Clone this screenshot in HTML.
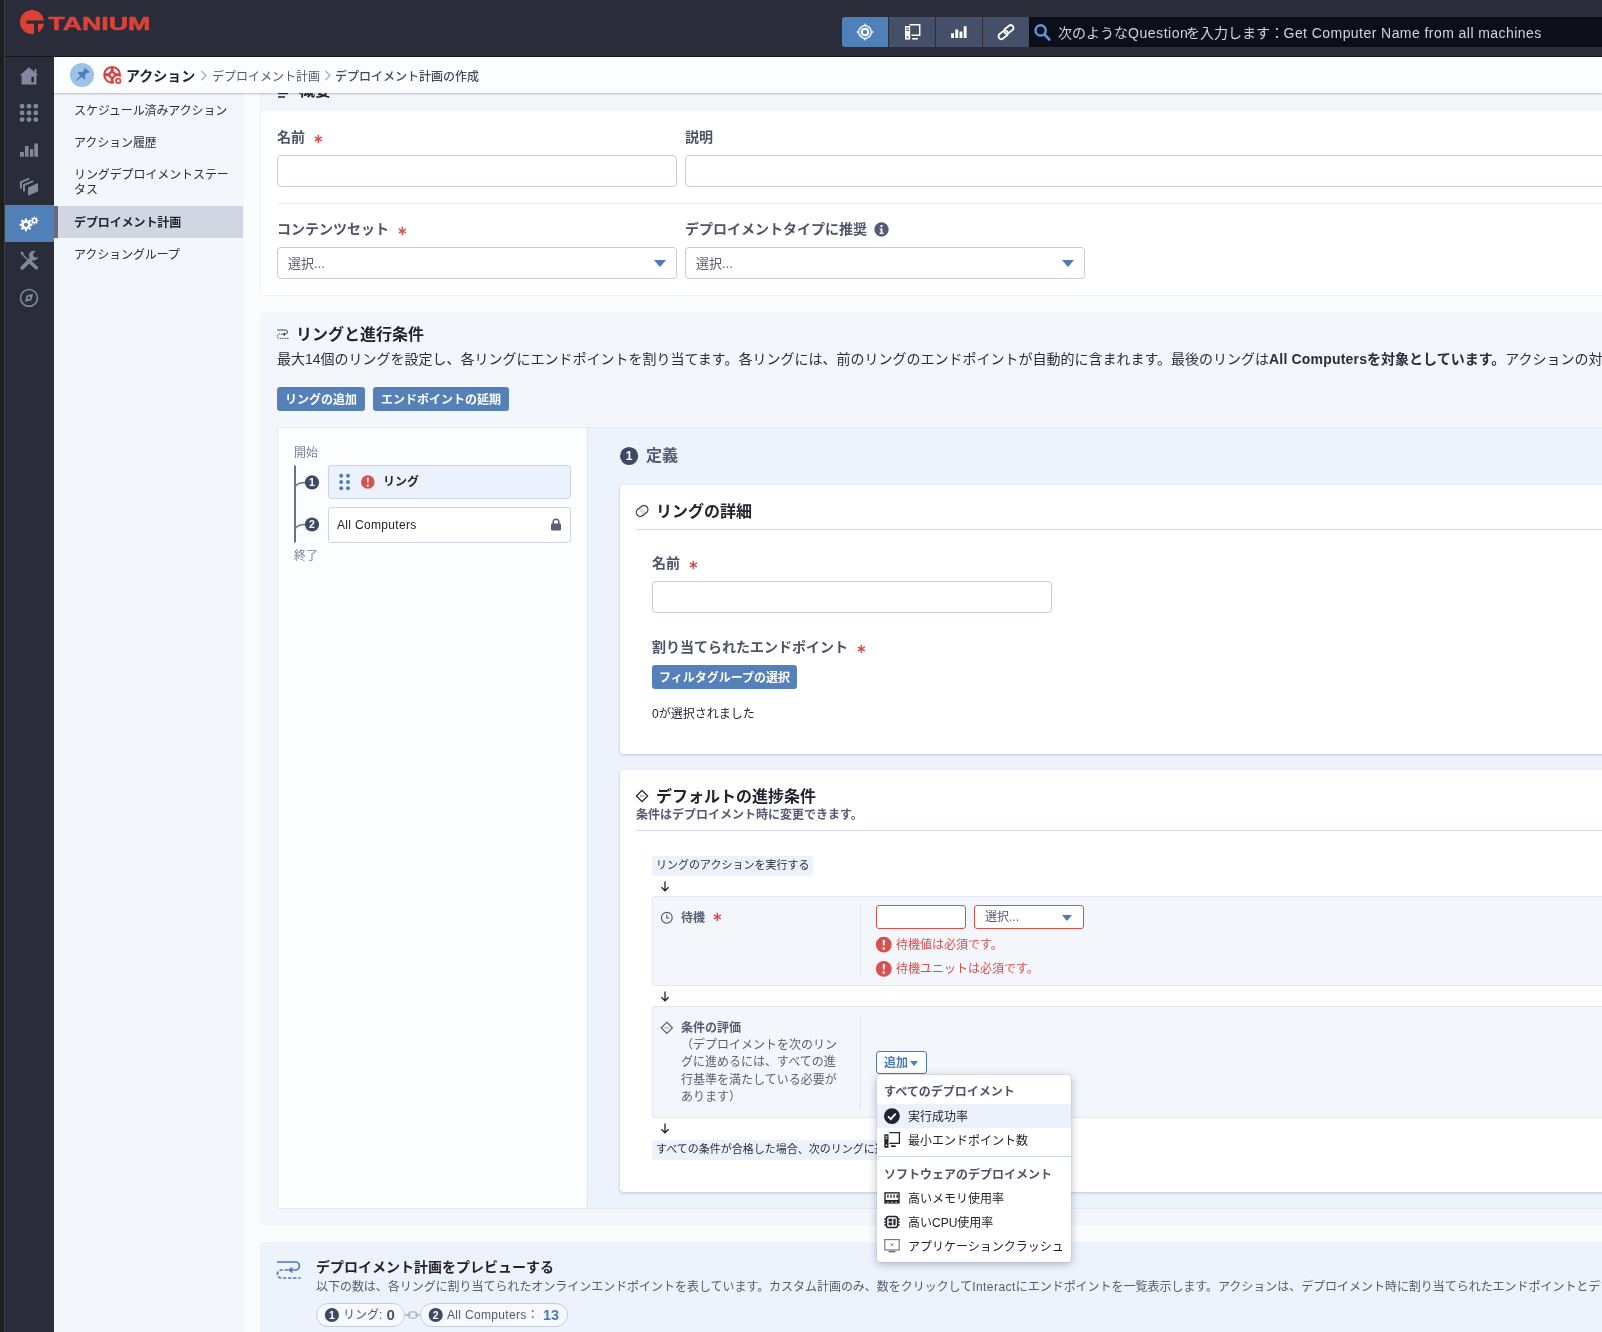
<!DOCTYPE html>
<html lang="ja">
<head>
<meta charset="utf-8">
<title>デプロイメント計画の作成</title>
<style>
*{box-sizing:border-box;margin:0;padding:0}
html,body{width:1602px;height:1332px;overflow:hidden}
body{position:relative;background:#fbfcfe;font-family:"Liberation Sans","Noto Sans CJK JP",sans-serif;font-size:12px;color:#22232d;line-height:1.3}
.abs{position:absolute}
#hdr,#rail,#crumb,#side,#main{will-change:transform}
#edge{left:0;top:0;width:4px;height:1332px;background:#1e1e1c;z-index:50}
#edge2{left:4px;top:0;width:1px;height:1332px;background:#3a3d4a;z-index:50}
#hdr{left:0;top:0;width:1602px;height:57px;background:#2a2c39;border-bottom:1px solid #14161d;z-index:40}
#rail{left:0;top:57px;width:54px;height:1275px;background:#2a2c39;z-index:30}
#rail .act{position:absolute;left:5px;top:148px;width:49px;height:36.6px;background:#5080b8}
#rail svg{position:absolute}
#crumb{left:54px;top:57px;width:1548px;height:36px;background:#fcfdff;box-shadow:0 1px 2px rgba(60,75,110,.35);z-index:20}
#side{left:54px;top:93px;width:190px;height:1239px;background:#f3f6fb;z-index:10}
#side .it{position:absolute;left:20px;width:168px;font-size:12px;color:#2b2d3a;line-height:15px;letter-spacing:-.1px}
#side .sel{position:absolute;left:0;top:113px;width:189px;height:32px;background:#d0d6e2;border-left:4px solid #676b82}
.lbl{position:absolute;font-size:14px;font-weight:bold;color:#4e5468;white-space:nowrap;line-height:18px}
.req{color:#d9504e;font-weight:bold;font-family:"DejaVu Sans",sans-serif;font-size:13px;margin-left:8px;position:relative;top:1px}
.inp{position:absolute;background:#fff;border:1px solid #c5ccda;border-radius:4px}
.ph{position:absolute;left:10px;top:7px;font-size:13px;color:#5a6072;line-height:17px}
.caret{position:absolute;width:0;height:0;border-left:6px solid transparent;border-right:6px solid transparent;border-top:7px solid #4a7cb8}
.btn{position:absolute;background:#5581b8;color:#fff;font-weight:bold;font-size:12px;border-radius:3px;height:24px;line-height:27px;text-align:center;white-space:nowrap}
.card{position:absolute;border-radius:4px}
.h16{position:absolute;font-size:16px;font-weight:bold;color:#22232d;white-space:nowrap;line-height:20px}
.nw{white-space:nowrap}
.chip{background:#ecf2fd;border-radius:3px;height:19.3px;margin-top:.4px;font-size:11px;line-height:18px;color:#2b2d3a;padding-left:4px;overflow:hidden}
.box{background:#f3f6fb;border:1px solid #e1e6ef;border-radius:3px}
.pill{height:23.6px;border:1px solid #c5ccda;border-radius:12px;background:#f6f9fe}
.ddh{font-size:12px;font-weight:bold;line-height:16px;color:#4e5468}
.ddi{font-size:12px;line-height:16px;color:#22232d}
</style>
</head>
<body>
<div id="edge" class="abs"></div><div id="edge2" class="abs"></div>

<!-- HEADER -->
<div id="hdr" class="abs">
 <svg class="abs" style="left:0;top:0" width="170" height="56" viewBox="0 0 170 56">
  <circle cx="32" cy="22" r="12" fill="#dc4138"/>
  <path d="M26.6 20.4H44.5V23.7H37.9V34.5H34.1V23.7H26.6Z" fill="#2a2c39"/>
  <text x="0" y="0" transform="translate(48.3,30) scale(1.44,1)" font-family="Liberation Sans, sans-serif" font-weight="bold" font-size="18.6" fill="#dc4138" stroke="#dc4138" stroke-width=".55" stroke-linejoin="round">TANIUM</text>
 </svg>
 <div class="abs" style="left:842px;top:17px;width:46px;height:30px;background:#5080b8;border-radius:3px 0 0 3px"></div>
 <div class="abs" style="left:889px;top:17px;width:46px;height:30px;background:#435068"></div>
 <div class="abs" style="left:936px;top:17px;width:46px;height:30px;background:#435068"></div>
 <div class="abs" style="left:983px;top:17px;width:46px;height:30px;background:#435068"></div>
 <div class="abs" style="left:1029px;top:17px;width:573px;height:30px;background:#0d0f18"></div>
 <svg class="abs" style="left:842px;top:17px" width="240" height="30" viewBox="842 17 240 30" fill="#fff">
  <!-- target -->
  <circle cx="865" cy="32" r="6.3" fill="none" stroke="#fff" stroke-width="1.3"/>
  <rect x="861.9" y="28.9" width="6.2" height="6.2" rx="2.6" fill="none" stroke="#fff" stroke-width="2.2"/>
  <path d="M863.5 24.7L865 23.2L866.5 24.7ZM863.5 39.3L865 40.8L866.5 39.3ZM857.7 30.5L856.2 32L857.7 33.5ZM872.3 30.5L873.8 32L872.3 33.5Z"/>
  <!-- computer -->
  <path d="M905 26h5.2v13.6h-5.2z"/>
  <path d="M906 28.2h3.2M906 30.4h3.2" stroke="#435068" stroke-width="1"/>
  <circle cx="907.6" cy="37.2" r="0.9" fill="#435068"/>
  <path d="M909.5 24.7h10.2v10.6h-8.2" fill="none" stroke="#fff" stroke-width="1.5"/>
  <path d="M912.2 38h5.6v1.6h-5.6z"/>
  <!-- bars -->
  <path d="M951.1 33.3h2.9v4.8h-2.9zM955.3 29.6h2.9v8.5h-2.9zM959.5 31.6h2.9v6.5h-2.9zM963.7 26.2h2.9v11.9h-2.9z"/>
  <!-- link -->
  <g fill="none" stroke="#fff" stroke-width="1.8" stroke-linecap="round">
   <rect x="-5.2" y="-2.8" width="10.4" height="5.6" rx="2.8" transform="translate(1003.2,34.8) rotate(-38)"/>
   <rect x="-5.2" y="-2.8" width="10.4" height="5.6" rx="2.8" transform="translate(1008.8,29.4) rotate(-38)"/>
  </g>
  <!-- search -->
  <circle cx="1040.6" cy="30.4" r="5.1" fill="none" stroke="#5a9be2" stroke-width="2.4"/>
  <path d="M1044.6 34.6L1049.2 39.4" stroke="#5a9be2" stroke-width="2.8" stroke-linecap="round"/>
 </svg>
 <div class="abs nw" style="left:1058px;top:23px;font-size:14px;line-height:20px;color:#d2d5de">次のような<span style="letter-spacing:.55px">Question</span><span style="margin-left:-2.4px">を入力します：</span><span style="letter-spacing:.44px;margin-left:-.5px">Get Computer Name from all machines</span></div>
</div>

<!-- RAIL -->
<div id="rail" class="abs"><div class="act"></div>
 <svg style="left:0;top:0" width="54" height="260" viewBox="0 0 54 260" fill="#83879f">
  <!-- home -->
  <path d="M29 10.2L38.2 18.2H36.4V27.6H21.6V18.2H19.8Z"/>
  <path d="M34.5 12h2v6h-2z"/>
  <path d="M31.4 19.8h2.6v5.6h-2.6z" fill="#2a2c39"/>
  <!-- grid -->
  <g>
   <circle cx="22.1" cy="49.2" r="2.4"/><circle cx="29" cy="49.2" r="2.4"/><circle cx="35.8" cy="49.2" r="2.4"/>
   <circle cx="22.1" cy="55.9" r="2.4"/><circle cx="29" cy="55.9" r="2.4"/><circle cx="35.8" cy="55.9" r="2.4"/>
   <circle cx="22.1" cy="62.6" r="2.4"/><circle cx="29" cy="62.6" r="2.4"/><circle cx="35.8" cy="62.6" r="2.4"/>
  </g>
  <!-- bars -->
  <path d="M20 95h3.9v4.7H20zM25 89.1h3.5v10.6H25zM29.9 92h3.4v7.7h-3.4zM34.3 86.4H38v13.3h-3.7z"/>
  <!-- layers -->
  <path d="M28 130.4L38 126V134.5L28 138.8Z"/>
  <path d="M24 134.6V128L33.2 124.1" fill="none" stroke="#83879f" stroke-width="2"/>
  <path d="M20.9 131.8V125.2L29.2 121.6" fill="none" stroke="#83879f" stroke-width="2"/>
  <!-- gears -->
  <path fill="#fff" fill-rule="evenodd" d="M24.87 163.24 L24.98 161.38 L27.02 161.38 L27.13 163.24 L28.42 163.77 L29.82 162.54 L31.26 163.98 L30.03 165.38 L30.56 166.67 L32.42 166.78 L32.42 168.82 L30.56 168.93 L30.03 170.22 L31.26 171.62 L29.82 173.06 L28.42 171.83 L27.13 172.36 L27.02 174.22 L24.98 174.22 L24.87 172.36 L23.58 171.83 L22.18 173.06 L20.74 171.62 L21.97 170.22 L21.44 168.93 L19.58 168.82 L19.58 166.78 L21.44 166.67 L21.97 165.38 L20.74 163.98 L22.18 162.54 L23.58 163.77Z M23.90 167.80 a2.10 2.10 0 1 0 4.20 0 a2.10 2.10 0 1 0 -4.20 0Z"/>
  <path fill="#fff" fill-rule="evenodd" d="M33.72 160.88 L33.77 159.65 L35.03 159.65 L35.08 160.88 L35.84 161.20 L36.75 160.36 L37.64 161.25 L36.80 162.16 L37.12 162.92 L38.35 162.97 L38.35 164.23 L37.12 164.28 L36.80 165.04 L37.64 165.95 L36.75 166.84 L35.84 166.00 L35.08 166.32 L35.03 167.55 L33.77 167.55 L33.72 166.32 L32.96 166.00 L32.05 166.84 L31.16 165.95 L32.00 165.04 L31.68 164.28 L30.45 164.23 L30.45 162.97 L31.68 162.92 L32.00 162.16 L31.16 161.25 L32.05 160.36 L32.96 161.20Z M33.10 163.60 a1.30 1.30 0 1 0 2.60 0 a1.30 1.30 0 1 0 -2.60 0Z"/>
  <!-- tools -->
  <path d="M36.3 210.7L30.6 205.5" stroke="#83879f" stroke-width="3.5" stroke-linecap="round" fill="none"/>
  <path d="M30.8 205.7L21.6 196.8" stroke="#83879f" stroke-width="1.5" fill="none"/>
  <path d="M20.3 196l1.5-1.6 2.3 1.7-1.9 2z"/>
  <path d="M22.2 210.9L31.6 201.6" stroke="#83879f" stroke-width="3.7" stroke-linecap="round" fill="none"/>
  <path d="M35.9 194.3a4.8 4.8 0 1 0 2.4 5.6l-3 .9-2.3-2.1.6-3z"/>
  <!-- compass -->
  <circle cx="29" cy="240.9" r="8.4" fill="none" stroke="#83879f" stroke-width="1.6"/>
  <path fill-rule="evenodd" d="M33.1 236.8L31.4 243.3L24.9 245L26.6 238.5ZM27.7 240.9a1.3 1.3 0 1 0 2.6 0a1.3 1.3 0 1 0-2.6 0Z"/>
 </svg>
</div>

<!-- BREADCRUMB -->
<div id="crumb" class="abs">
 <svg class="abs" style="left:0;top:0" width="160" height="36" viewBox="54 57 160 36">
  <circle cx="82" cy="74.9" r="12" fill="#9cc3e6"/>
  <g transform="translate(81.6,75.5) rotate(45) scale(1.06)" fill="#4f7fba">
   <path d="M-2.9 -7.6h5.8v1.4l-1 .6v3.2l2.6 1.8v1.5h-9v-1.5l2.6-1.8v-3.2l-1-.6z"/>
   <path d="M-1 .7h2L0 8.6z"/>
  </g>
  <circle cx="112.1" cy="74.8" r="7.9" fill="none" stroke="#d9413a" stroke-width="2"/>
  <path d="M112.1 67v15.6M104.3 74.8h15.6" stroke="#d9413a" stroke-width="2.9"/>
  <circle cx="112.1" cy="74.8" r="2.7" fill="#fcfdff" stroke="#d9413a" stroke-width="2.1"/>
  <circle cx="118.2" cy="80.9" r="3" fill="#fcfdff" stroke="#fcfdff" stroke-width="2.6"/>
  <circle cx="118.2" cy="80.9" r="2.2" fill="#fcfdff" stroke="#d9413a" stroke-width="1.7"/>
 </svg>
 <div class="abs nw" style="left:72px;top:9px;font-size:14px;font-weight:bold;line-height:20px;color:#22232d">アクション</div>
 <svg class="abs" style="left:146px;top:13px" width="8" height="11" viewBox="0 0 8 11"><path d="M1.5 1L6 5.5L1.5 10" fill="none" stroke="#a3a8b8" stroke-width="1.1"/></svg>
 <div class="abs nw" style="left:158px;top:10.5px;font-size:12px;line-height:18px;color:#555b6e">デプロイメント計画</div>
 <svg class="abs" style="left:269.5px;top:13px" width="8" height="11" viewBox="0 0 8 11"><path d="M1.5 1L6 5.5L1.5 10" fill="none" stroke="#a3a8b8" stroke-width="1.1"/></svg>
 <div class="abs nw" style="left:281px;top:10.5px;font-size:12px;line-height:18px;color:#444a5c;font-weight:500">デプロイメント計画の作成</div>
</div>

<!-- SIDE MENU -->
<div id="side" class="abs">
 <div class="sel"></div>
 <div class="it" style="top:10.5px">スケジュール済みアクション</div>
 <div class="it" style="top:43px">アクション履歴</div>
 <div class="it" style="top:75px;width:160px">リングデプロイメントステータス</div>
 <div class="it" style="top:123px;font-weight:bold;color:#22232d">デプロイメント計画</div>
 <div class="it" style="top:155px">アクショングループ</div>
</div>

<!-- MAIN -->
<div id="main" class="abs" style="left:243px;top:93px;width:1359px;height:1239px;overflow:hidden">
<div class="abs" id="pg" style="left:-243px;top:-93px;width:1602px;height:1332px">

<!-- CARD 1 : overview -->
<div class="card" style="left:260px;top:60px;width:1360px;height:236px;background:#fff;border:1px solid #eef1f6"></div>
<div class="abs" style="left:261px;top:60px;width:1341px;height:50.7px;background:#f3f6fb"></div>
<svg class="abs" style="left:277px;top:84px" width="12" height="14" viewBox="0 0 12 14"><path d="M1 1.5h10M1 5.5h10M1 9.5h10M1 13h7" stroke="#22232d" stroke-width="1.6" fill="none"/></svg>
<div class="h16" style="left:299px;top:81px">概要</div>

<div class="lbl" style="left:277px;top:128px">名前<span class="req">∗</span></div>
<div class="inp" style="left:277px;top:155px;width:400px;height:32px"></div>
<div class="lbl" style="left:685px;top:128px">説明</div>
<div class="inp" style="left:685px;top:155px;width:940px;height:32px"></div>
<div class="abs" style="left:277px;top:203px;width:1325px;height:1px;background:#eef1f5"></div>
<div class="lbl" style="left:277px;top:220px">コンテンツセット<span class="req">∗</span></div>
<div class="inp" style="left:277px;top:247px;width:400px;height:32px"><div class="ph">選択...</div><div class="caret" style="left:376px;top:12px"></div></div>
<div class="lbl" style="left:685px;top:220px">デプロイメントタイプに推奨</div>
<svg class="abs" style="left:873.6px;top:221.7px" width="15" height="15" viewBox="0 0 14 14"><circle cx="7" cy="7" r="6.7" fill="#555b72"/><circle cx="7" cy="3.8" r="1.1" fill="#fff"/><path d="M5.3 6h2.6v4h1v1.2H5.2V10h1V7.2h-.9z" fill="#fff"/></svg>
<div class="inp" style="left:685px;top:247px;width:400px;height:32px"><div class="ph">選択...</div><div class="caret" style="left:376px;top:12px"></div></div>

<!-- CARD 2 : rings -->
<div class="card" style="left:260px;top:312px;width:1360px;height:914px;background:#f3f6fb"></div>
<svg class="abs" style="left:275px;top:327px" width="16" height="14" viewBox="275 327 16 14"><g fill="none" stroke="#3f4458" stroke-width="1"><path d="M277.2 330h8.2a2.1 2.1 0 0 1 0 4.2H284.8"/><path d="M282.6 334.2H279.4a2.1 2.1 0 0 0 0 4.2H288.8" stroke-dasharray="1.5 .9"/></g><path d="M282.4 334.2l2.6-1.9v3.8z" fill="#3f4458"/></svg>
<div class="h16" style="left:296px;top:325px">リングと進行条件</div>
<div class="abs nw" style="left:277px;top:349px;font-size:14px;line-height:20px;color:#2b2d3a">最大14個のリングを設定し、各リングにエンドポイントを割り当てます。各リングには、前のリングのエンドポイントが自動的に含まれます。最後のリングは<b><span style="letter-spacing:.18px">All Computers</span>を対象としています。</b>アクションの対象となるエンドポイントは、デプロイメント時に決定されます。</div>
<div class="btn" style="left:277px;top:387px;width:88px">リングの追加</div>
<div class="btn" style="left:373px;top:387px;width:136px">エンドポイントの延期</div>

<!-- ring panel -->
<div class="abs" style="left:277px;top:427px;width:1340px;height:782px;background:#edf3fd;border:1px solid #e4e9f2"></div>
<div class="abs" style="left:278px;top:428px;width:310px;height:780px;background:#fcfdff;border-right:1px solid #e1e7f0"></div>
<div class="abs nw" style="left:294px;top:445px;font-size:12px;line-height:16px;color:#7b8196">開始</div>
<svg class="abs" style="left:290px;top:462px" width="36" height="84" viewBox="290 462 36 84">
 <path d="M295 465.5V542.5" stroke="#6c7188" stroke-width="2" fill="none"/>
 <path d="M295.4 486.5Q296.5 482.6 306 482.4M295.4 528.6Q296.5 524.7 306 524.5" stroke="#6c7188" stroke-width="1.5" fill="none"/>
 <circle cx="312" cy="482.4" r="7.1" fill="#3e4966"/><circle cx="312" cy="524.5" r="7.1" fill="#3e4966"/>
 <text x="312" y="486" text-anchor="middle" font-size="10.5" font-weight="bold" fill="#fff" font-family="Liberation Sans, sans-serif">1</text>
 <text x="312" y="528.1" text-anchor="middle" font-size="10.5" font-weight="bold" fill="#fff" font-family="Liberation Sans, sans-serif">2</text>
</svg>
<div class="abs" style="left:328px;top:465px;width:243px;height:34px;background:#ecf2fd;border:1px solid #ccd5e4;border-radius:3px"></div>
<svg class="abs" style="left:338px;top:472px" width="40" height="20" viewBox="338 472 40 20">
 <g fill="#4a7cb8"><circle cx="341.2" cy="475.8" r="1.95"/><circle cx="348" cy="475.8" r="1.95"/><circle cx="341.2" cy="482" r="1.95"/><circle cx="348" cy="482" r="1.95"/><circle cx="341.2" cy="488.2" r="1.95"/><circle cx="348" cy="488.2" r="1.95"/></g>
 <circle cx="367.8" cy="482" r="6.8" fill="#d9504e"/><path d="M366.8 477.8h2l-.3 5h-1.4z" fill="#fff"/><circle cx="367.8" cy="485.6" r="1.1" fill="#fff"/>
</svg>
<div class="abs nw" style="left:383px;top:474px;font-size:12px;font-weight:bold;line-height:16px;color:#22232d">リング</div>
<div class="abs" style="left:328px;top:507px;width:243px;height:36px;background:#fff;border:1px solid #ccd5e4;border-radius:3px"></div>
<div class="abs nw" style="left:337px;top:517px;font-size:12px;line-height:16px;color:#22232d;letter-spacing:.33px">All Computers</div>
<svg class="abs" style="left:550px;top:518px" width="12" height="13" viewBox="0 0 12 13"><path d="M3.2 6V4a2.8 2.8 0 0 1 5.6 0v2" fill="none" stroke="#5a5f75" stroke-width="1.5"/><rect x="1" y="5.6" width="10" height="7" rx="1" fill="#5a5f75"/></svg>
<div class="abs nw" style="left:294px;top:548px;font-size:12px;line-height:16px;color:#7b8196">終了</div>
<svg class="abs" style="left:619px;top:446px" width="20" height="20" viewBox="0 0 20 20"><circle cx="10.1" cy="10" r="9.1" fill="#3e4966"/><text x="10.1" y="14.3" text-anchor="middle" font-size="12" font-weight="bold" fill="#fff" font-family="Liberation Sans, sans-serif">1</text></svg>
<div class="h16" style="left:646px;top:446px;color:#565c73">定義</div>

<div class="card" style="left:620px;top:485px;width:1000px;height:269px;background:#fff;box-shadow:0 1px 3px rgba(70,90,130,.3)"></div>
<svg class="abs" style="left:635px;top:504px" width="14" height="14" viewBox="0 0 14 14"><g transform="translate(7.1,7) rotate(-38)" fill="none" stroke="#2b2d3a" stroke-width="1.15"><rect x="-6.3" y="-4" width="12.6" height="8" rx="4"/><path d="M-0.9 -4v8M0.9 -4v8" stroke-width=".6" stroke="#8a8fa3"/></g></svg>
<div class="h16" style="left:656px;top:502px">リングの詳細</div>
<div class="abs" style="left:636px;top:529px;width:980px;height:1px;background:#d3d9e5"></div>
<div class="lbl" style="left:652px;top:554px">名前<span class="req">∗</span></div>
<div class="inp" style="left:652px;top:581px;width:400px;height:32px"></div>
<div class="lbl" style="left:652px;top:638px">割り当てられたエンドポイント<span class="req">∗</span></div>
<div class="btn" style="left:652px;top:665px;width:145px">フィルタグループの選択</div>
<div class="abs nw" style="left:652px;top:706px;font-size:12px;line-height:16px;color:#22232d">0が選択されました</div>

<div class="card" style="left:620px;top:770px;width:1000px;height:422px;background:#fff;box-shadow:0 1px 3px rgba(70,90,130,.3)"></div>
<svg class="abs" style="left:635px;top:789px" width="14" height="14" viewBox="0 0 14 14"><path d="M7 1.4L12.6 7L7 12.6L1.4 7Z" fill="none" stroke="#22232d" stroke-width="1.3"/><path d="M4.8 7h4.4" stroke="#22232d" stroke-width="0.9" stroke-dasharray="1 .7"/></svg>
<div class="h16" style="left:656px;top:787px">デフォルトの進捗条件</div>
<div class="abs nw" style="left:636px;top:807px;font-size:12px;font-weight:bold;line-height:16px;color:#555b72">条件はデプロイメント時に変更できます。</div>
<div class="abs" style="left:636px;top:830px;width:980px;height:1px;background:#d3d9e5"></div>
<div class="abs nw chip" style="left:652px;top:856px;width:161px">リングのアクションを実行する</div>
<svg class="abs arr" style="left:660px;top:881px" width="10" height="11" viewBox="0 0 10 11"><path d="M5 .5V9.6M1.4 6.2L5 9.8L8.6 6.2" fill="none" stroke="#22232d" stroke-width="1.3"/></svg>
<div class="abs box" style="left:652px;top:896px;width:970px;height:90px"></div>
<svg class="abs" style="left:660px;top:911px" width="14" height="14" viewBox="0 0 14 14"><circle cx="6.8" cy="6.8" r="5.4" fill="none" stroke="#4e5468" stroke-width="1.1"/><path d="M6.8 3.6V7h2.6" fill="none" stroke="#4e5468" stroke-width="1.1"/></svg>
<div class="abs nw" style="left:681px;top:910px;font-size:12px;font-weight:bold;line-height:16px;color:#565c73">待機<span class="req" style="font-size:13px;margin-left:7px;top:-1px">∗</span></div>
<div class="abs" style="left:860px;top:905px;width:1px;height:72px;background:#dfe4ec"></div>
<div class="abs" style="left:876px;top:905px;width:90px;height:24px;background:#fff;border:1px solid #d9504e;border-radius:3px"></div>
<div class="abs" style="left:974px;top:905px;width:110px;height:24px;background:#fff;border:1px solid #d9504e;border-radius:3px"><div class="abs nw" style="left:10px;top:3px;font-size:12px;line-height:16px;color:#5a6072">選択...</div><div class="caret" style="left:87px;top:9px;border-left-width:5px;border-right-width:5px;border-top-width:6px"></div></div>
<svg class="abs" style="left:876px;top:936.4px;overflow:visible" width="16" height="42" viewBox="0 -1 16 42"><circle cx="7.8" cy="7.6" r="7.9" fill="#d9504e"/><path d="M6.6 3h2.4l-.4 5.6h-1.6z" fill="#fff"/><circle cx="7.8" cy="11.4" r="1.25" fill="#fff"/><circle cx="7.8" cy="31.8" r="7.9" fill="#d9504e"/><path d="M6.6 27.2h2.4l-.4 5.6h-1.6z" fill="#fff"/><circle cx="7.8" cy="35.6" r="1.25" fill="#fff"/></svg>
<div class="abs nw" style="left:896px;top:937px;font-size:12px;line-height:16px;color:#d9504e">待機値は必須です。</div>
<div class="abs nw" style="left:896px;top:961px;font-size:12px;line-height:16px;color:#d9504e">待機ユニットは必須です。</div>
<svg class="abs arr" style="left:660px;top:991px" width="10" height="11" viewBox="0 0 10 11"><path d="M5 .5V9.6M1.4 6.2L5 9.8L8.6 6.2" fill="none" stroke="#22232d" stroke-width="1.3"/></svg>
<div class="abs box" style="left:652px;top:1006px;width:970px;height:112px"></div>
<svg class="abs" style="left:660px;top:1021px" width="14" height="14" viewBox="0 0 14 14"><path d="M6.8 1.2L12.4 6.8L6.8 12.4L1.2 6.8Z" fill="none" stroke="#4e5468" stroke-width="1.1"/><path d="M4.6 6.8h4.4" stroke="#4e5468" stroke-width="0.8" stroke-dasharray="1 .7"/></svg>
<div class="abs nw" style="left:681px;top:1020px;font-size:12px;font-weight:bold;line-height:16px;color:#565c73">条件の評価</div>
<div class="abs" style="left:681px;top:1037px;width:170px;font-size:12px;line-height:17.45px;color:#5a6076">（デプロイメントを次のリン<br>グに進めるには、すべての進<br>行基準を満たしている必要が<br>あります）</div>
<div class="abs" style="left:860px;top:1015px;width:1px;height:94px;background:#dfe4ec"></div>
<div class="abs" style="left:876px;top:1050.5px;width:51px;height:23.3px;background:#fff;border:1px solid #4a7cb8;border-radius:3px"><div class="abs nw" style="left:7px;top:3px;font-size:12px;font-weight:bold;line-height:16px;color:#4a7cb8">追加</div><div class="caret" style="left:33px;top:9px;border-left-width:4px;border-right-width:4px;border-top-width:5px"></div></div>
<svg class="abs arr" style="left:660px;top:1123px" width="10" height="11" viewBox="0 0 10 11"><path d="M5 .5V9.6M1.4 6.2L5 9.8L8.6 6.2" fill="none" stroke="#22232d" stroke-width="1.3"/></svg>
<div class="abs nw chip" style="left:652px;top:1140px;width:280px">すべての条件が合格した場合、次のリングに進みます</div>

<div class="card" style="left:260px;top:1242px;width:1360px;height:120px;background:#edf3fd"></div>
<svg class="abs" style="left:274px;top:1258px" width="30" height="24" viewBox="274 1258 30 24"><g fill="none" stroke="#4a7cb8" stroke-width="1.7"><path d="M277 1262h18.4a4 4 0 0 1 0 8H292"/><path d="M288 1270H281.4a4 4 0 0 0 0 8H300.6" stroke-dasharray="3.4 1.7"/></g><path d="M287.8 1270l4.6-3.3v6.6z" fill="#4a7cb8"/></svg>
<div class="abs nw" style="left:316px;top:1258px;font-size:14px;font-weight:bold;line-height:19px;color:#22232d">デプロイメント計画をプレビューする</div>
<div class="abs nw" style="left:316px;top:1279px;font-size:12px;line-height:16px;color:#555b6e;letter-spacing:-.035px">以下の数は、各リングに割り当てられたオンラインエンドポイントを表しています。カスタム計画のみ、数をクリックして<span style="letter-spacing:.45px">Interact</span>にエンドポイントを一覧表示します。アクションは、デプロイメント時に割り当てられたエンドポイントとデプロイメントの進行状況に基づいて実行されます。</div>
<div class="abs pill" style="left:316px;top:1303px;width:89px"></div>
<div class="abs pill" style="left:420px;top:1303px;width:148px"></div>
<svg class="abs" style="left:316px;top:1303px" width="260" height="24" viewBox="316 1303 260 24">
 <circle cx="331.9" cy="1315" r="7.1" fill="#3e4966"/><circle cx="435.7" cy="1315" r="7.1" fill="#3e4966"/>
 <text x="331.9" y="1318.7" text-anchor="middle" font-size="10.5" font-weight="bold" fill="#fff" font-family="Liberation Sans, sans-serif">1</text>
 <text x="435.7" y="1318.7" text-anchor="middle" font-size="10.5" font-weight="bold" fill="#fff" font-family="Liberation Sans, sans-serif">2</text>
 <g fill="none" stroke="#a9b3cb" stroke-width="1.3"><path d="M405 1315h5.6M415 1315h5.4"/><rect x="408.6" y="1311.8" width="8.4" height="6.4" rx="3.2"/></g>
</svg>
<div class="abs nw" style="left:343px;top:1307px;font-size:12px;line-height:16px;color:#555b6e">リング:</div>
<div class="abs nw" style="left:386.5px;top:1305.5px;font-size:15px;line-height:18px;color:#4e5468;font-weight:bold">0</div>
<div class="abs nw" style="left:447px;top:1307px;font-size:12px;line-height:16px;color:#555b6e;letter-spacing:.33px">All Computers：</div>
<div class="abs nw" style="left:543px;top:1305.5px;font-size:14.5px;line-height:18px;color:#4a7cb8;font-weight:bold">13</div>

<div class="abs" style="left:877px;top:1075px;width:194px;height:187px;background:#fff;border-radius:3px;box-shadow:0 2px 8px rgba(40,55,90,.35),0 0 1px rgba(40,55,90,.4)"></div>
<div class="abs" style="left:877px;top:1104px;width:194px;height:24px;background:#ecf2fd"></div>
<div class="abs" style="left:877px;top:1156px;width:194px;height:1px;background:#d3d9e5"></div>
<div class="abs nw ddh" style="left:884px;top:1084px">すべてのデプロイメント</div>
<div class="abs nw ddi" style="left:908px;top:1109px">実行成功率</div>
<div class="abs nw ddi" style="left:908px;top:1133px">最小エンドポイント数</div>
<div class="abs nw ddh" style="left:884px;top:1166.5px">ソフトウェアのデプロイメント</div>
<div class="abs nw ddi" style="left:908px;top:1191px">高いメモリ使用率</div>
<div class="abs nw ddi" style="left:908px;top:1215px">高いCPU使用率</div>
<div class="abs nw ddi" style="left:908px;top:1239px">アプリケーションクラッシュ</div>
<svg class="abs" style="left:882px;top:1106px" width="20" height="150" viewBox="882 1106 20 150">
 <circle cx="891.9" cy="1116.2" r="7.9" fill="#22232d"/><path d="M888.1 1116.4l2.7 2.7 4.9-5.4" fill="none" stroke="#fff" stroke-width="1.9"/>
 <rect x="884.3" y="1134.2" width="4.2" height="13.5" rx=".5" fill="#22232d"/>
 <path d="M885.2 1136.3h2.4M885.2 1138.3h2.4" stroke="#fff" stroke-width=".8"/><circle cx="886.4" cy="1145.3" r=".8" fill="#fff"/>
 <path d="M889.4 1132.7h10v10.6h-10" fill="none" stroke="#22232d" stroke-width="1.3"/>
 <path d="M891.6 1145.2h3.6l.9 1.9h-5.4z" fill="#22232d"/>
 <rect x="885" y="1192.9" width="14" height="10" fill="#fff" stroke="#22232d" stroke-width="1.4"/>
 <path d="M887.2 1194.8h1.4v3h-1.4zM890.3 1194.8h1.4v3h-1.4zM893.4 1194.8h1.4v3h-1.4zM896.5 1194.8h1.4v3h-1.4z" fill="#22232d"/>
 <path d="M885 1201.1h14" stroke="#22232d" stroke-width="2.2"/>
 <path d="M887.5 1201.6h.9v1.2h-.9zM891.6 1201.6h.9v1.2h-.9zM895.7 1201.6h.9v1.2h-.9z" fill="#fff"/>
 <path d="M884.3 1219h1.8M884.3 1222h1.8M884.3 1225h1.8M897.9 1219h1.8M897.9 1222h1.8M897.9 1225h1.8" stroke="#22232d" stroke-width="1.3"/>
 <rect x="886.4" y="1216.4" width="11.2" height="11.2" rx="2.4" fill="#fff" stroke="#22232d" stroke-width="1.5"/>
 <path d="M888.6 1218.8h3.6v2.8h-3.6zM888.6 1222.6h3.6v2.6h-3.6zM893.4 1218.8h2.2v6.4h-2.2z" fill="#22232d"/>
 <g fill="none" stroke="#6b7085" stroke-width="1.1"><rect x="884.8" y="1239.6" width="14.4" height="10.4"/><path d="M890.6 1243.2l2.8 2.8M893.4 1243.2l-2.8 2.8" stroke-width=".9"/><path d="M888.6 1251.6h6.8" stroke-width="1.6"/></g>
</svg>

</div>
</div>

</body>
</html>
